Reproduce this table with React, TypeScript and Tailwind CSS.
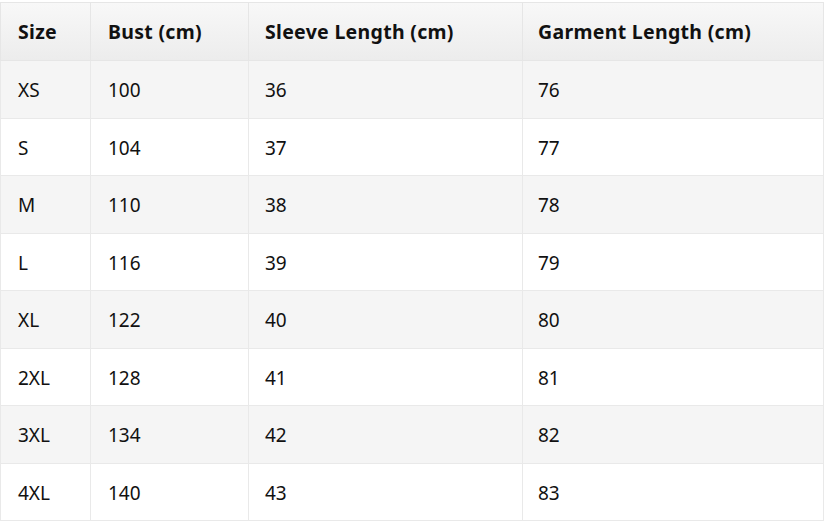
import React from 'react';

const rows = [
  ['XS', '100', '36', '76'],
  ['S', '104', '37', '77'],
  ['M', '110', '38', '78'],
  ['L', '116', '39', '79'],
  ['XL', '122', '40', '80'],
  ['2XL', '128', '41', '81'],
  ['3XL', '134', '42', '82'],
  ['4XL', '140', '43', '83'],
];

const headers = ['Size', 'Bust (cm)', 'Sleeve Length (cm)', 'Garment Length (cm)'];
const widths = ['w-[90px]', 'w-[158px]', 'w-[274px]', 'w-[301px]'];
const pads = ['pl-[17px]', 'pl-[17px]', 'pl-[16px]', 'pl-[15px]'];

export default function App() {
  return (
    <div className="w-[824px] h-[524px] bg-white pt-[2px] font-['Noto_Sans',sans-serif] text-[#111]">
      <table className="w-[823px] table-fixed border-collapse text-[19px]">
        <thead>
          <tr className="h-[58px] bg-gradient-to-b from-[#f8f8f8] to-[#ececec]">
            {headers.map((h, i) => (
              <th
                key={h}
                className={`${widths[i]} ${pads[i]} border border-[#e6e6e6] pr-4 text-left text-[19.5px] font-bold tracking-[0.3px]`}
              >
                {h}
              </th>
            ))}
          </tr>
        </thead>
        <tbody>
          {rows.map((r, ri) => (
            <tr key={r[0]} className={`h-[57.5px] ${ri % 2 === 0 ? 'bg-[#f5f5f5]' : 'bg-white'}`}>
              {r.map((c, ci) => (
                <td key={ci} className={`${pads[ci]} border border-[#e9e9e9] pr-4 pt-[2px]`}>
                  {c}
                </td>
              ))}
            </tr>
          ))}
        </tbody>
      </table>
    </div>
  );
}
